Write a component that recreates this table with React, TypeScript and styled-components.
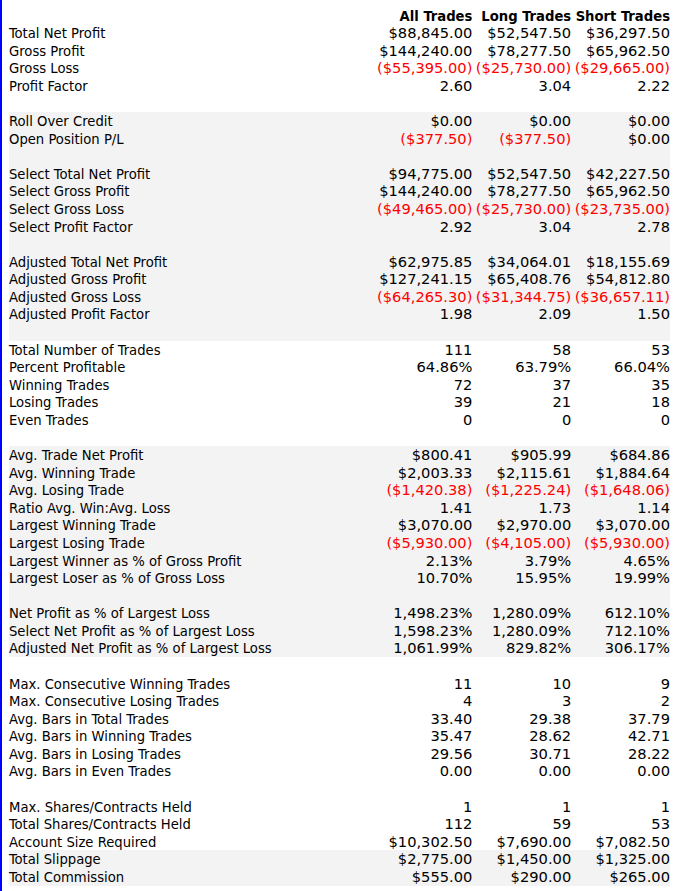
import React from "react";
import styled, { createGlobalStyle } from "styled-components";

const GlobalStyle = createGlobalStyle`
  html, body { margin: 0; padding: 0; background: #ffffff; }
  body { font-family: "DejaVu Sans", Verdana, sans-serif; color: #000; }
`;

type Val = { text: string; neg?: boolean };
type RowData = { label?: string; values?: Val[]; shaded?: boolean };

const v = (text: string): Val => ({ text, neg: text.startsWith("(") });

const rows: RowData[] = [
  { label: "Total Net Profit", values: ["$88,845.00", "$52,547.50", "$36,297.50"].map(v) },
  { label: "Gross Profit", values: ["$144,240.00", "$78,277.50", "$65,962.50"].map(v) },
  { label: "Gross Loss", values: ["($55,395.00)", "($25,730.00)", "($29,665.00)"].map(v) },
  { label: "Profit Factor", values: ["2.60", "3.04", "2.22"].map(v) },
  {},
  { label: "Roll Over Credit", values: ["$0.00", "$0.00", "$0.00"].map(v), shaded: true },
  { label: "Open Position P/L", values: ["($377.50)", "($377.50)", "$0.00"].map(v), shaded: true },
  { shaded: true },
  { label: "Select Total Net Profit", values: ["$94,775.00", "$52,547.50", "$42,227.50"].map(v), shaded: true },
  { label: "Select Gross Profit", values: ["$144,240.00", "$78,277.50", "$65,962.50"].map(v), shaded: true },
  { label: "Select Gross Loss", values: ["($49,465.00)", "($25,730.00)", "($23,735.00)"].map(v), shaded: true },
  { label: "Select Profit Factor", values: ["2.92", "3.04", "2.78"].map(v), shaded: true },
  { shaded: true },
  { label: "Adjusted Total Net Profit", values: ["$62,975.85", "$34,064.01", "$18,155.69"].map(v), shaded: true },
  { label: "Adjusted Gross Profit", values: ["$127,241.15", "$65,408.76", "$54,812.80"].map(v), shaded: true },
  { label: "Adjusted Gross Loss", values: ["($64,265.30)", "($31,344.75)", "($36,657.11)"].map(v), shaded: true },
  { label: "Adjusted Profit Factor", values: ["1.98", "2.09", "1.50"].map(v), shaded: true },
  { shaded: true },
  { label: "Total Number of Trades", values: ["111", "58", "53"].map(v) },
  { label: "Percent Profitable", values: ["64.86%", "63.79%", "66.04%"].map(v) },
  { label: "Winning Trades", values: ["72", "37", "35"].map(v) },
  { label: "Losing Trades", values: ["39", "21", "18"].map(v) },
  { label: "Even Trades", values: ["0", "0", "0"].map(v) },
  {},
  { label: "Avg. Trade Net Profit", values: ["$800.41", "$905.99", "$684.86"].map(v), shaded: true },
  { label: "Avg. Winning Trade", values: ["$2,003.33", "$2,115.61", "$1,884.64"].map(v), shaded: true },
  { label: "Avg. Losing Trade", values: ["($1,420.38)", "($1,225.24)", "($1,648.06)"].map(v), shaded: true },
  { label: "Ratio Avg. Win:Avg. Loss", values: ["1.41", "1.73", "1.14"].map(v), shaded: true },
  { label: "Largest Winning Trade", values: ["$3,070.00", "$2,970.00", "$3,070.00"].map(v), shaded: true },
  { label: "Largest Losing Trade", values: ["($5,930.00)", "($4,105.00)", "($5,930.00)"].map(v), shaded: true },
  { label: "Largest Winner as % of Gross Profit", values: ["2.13%", "3.79%", "4.65%"].map(v), shaded: true },
  { label: "Largest Loser as % of Gross Loss", values: ["10.70%", "15.95%", "19.99%"].map(v), shaded: true },
  { shaded: true },
  { label: "Net Profit as % of Largest Loss", values: ["1,498.23%", "1,280.09%", "612.10%"].map(v), shaded: true },
  { label: "Select Net Profit as % of Largest Loss", values: ["1,598.23%", "1,280.09%", "712.10%"].map(v), shaded: true },
  { label: "Adjusted Net Profit as % of Largest Loss", values: ["1,061.99%", "829.82%", "306.17%"].map(v), shaded: true },
  {},
  { label: "Max. Consecutive Winning Trades", values: ["11", "10", "9"].map(v) },
  { label: "Max. Consecutive Losing Trades", values: ["4", "3", "2"].map(v) },
  { label: "Avg. Bars in Total Trades", values: ["33.40", "29.38", "37.79"].map(v) },
  { label: "Avg. Bars in Winning Trades", values: ["35.47", "28.62", "42.71"].map(v) },
  { label: "Avg. Bars in Losing Trades", values: ["29.56", "30.71", "28.22"].map(v) },
  { label: "Avg. Bars in Even Trades", values: ["0.00", "0.00", "0.00"].map(v) },
  {},
  { label: "Max. Shares/Contracts Held", values: ["1", "1", "1"].map(v) },
  { label: "Total Shares/Contracts Held", values: ["112", "59", "53"].map(v) },
  { label: "Account Size Required", values: ["$10,302.50", "$7,690.00", "$7,082.50"].map(v) },
  { label: "Total Slippage", values: ["$2,775.00", "$1,450.00", "$1,325.00"].map(v), shaded: true },
  { label: "Total Commission", values: ["$555.00", "$290.00", "$265.00"].map(v), shaded: true },
];

const Page = styled.div`
  min-height: 891px;
  box-sizing: border-box;
  border-left: 2px solid #0000ff;
  padding: 6.6px 0 0 7px;
`;

const Table = styled.div`
  width: 661px;
  display: flex;
  flex-direction: column;
`;

const Row = styled.div<{ $shaded?: boolean }>`
  display: grid;
  grid-template-columns: 1fr repeat(3, 98.8px);
  height: 17.58px;
  line-height: 17.58px;
  background: ${(p) => (p.$shaded ? "#f3f3f3" : "transparent")};
  font-size: 14.67px;
`;

const Label = styled.div`
  font-family: "DejaVu Sans Condensed", "Liberation Sans", sans-serif;
  white-space: nowrap;
`;

const Value = styled.div<{ $neg?: boolean }>`
  font-family: "DejaVu Sans", Verdana, sans-serif;
  text-align: right;
  white-space: nowrap;
  color: ${(p) => (p.$neg ? "#ff0000" : "#000000")};
`;

const HeadCell = styled.div`
  font-family: "DejaVu Sans Condensed", "Liberation Sans", sans-serif;
  font-weight: bold;
  text-align: right;
  white-space: nowrap;
`;

export default function App() {
  return (
    <>
      <GlobalStyle />
      <Page>
        <Table>
          <Row>
            <Label />
            <HeadCell>All Trades</HeadCell>
            <HeadCell>Long Trades</HeadCell>
            <HeadCell>Short Trades</HeadCell>
          </Row>
          {rows.map((r, i) => (
            <Row key={i} $shaded={r.shaded}>
              <Label>{r.label ?? ""}</Label>
              {(r.values ?? [undefined, undefined, undefined]).map((val, j) => (
                <Value key={j} $neg={val?.neg}>
                  {val?.text ?? ""}
                </Value>
              ))}
            </Row>
          ))}
        </Table>
      </Page>
    </>
  );
}
